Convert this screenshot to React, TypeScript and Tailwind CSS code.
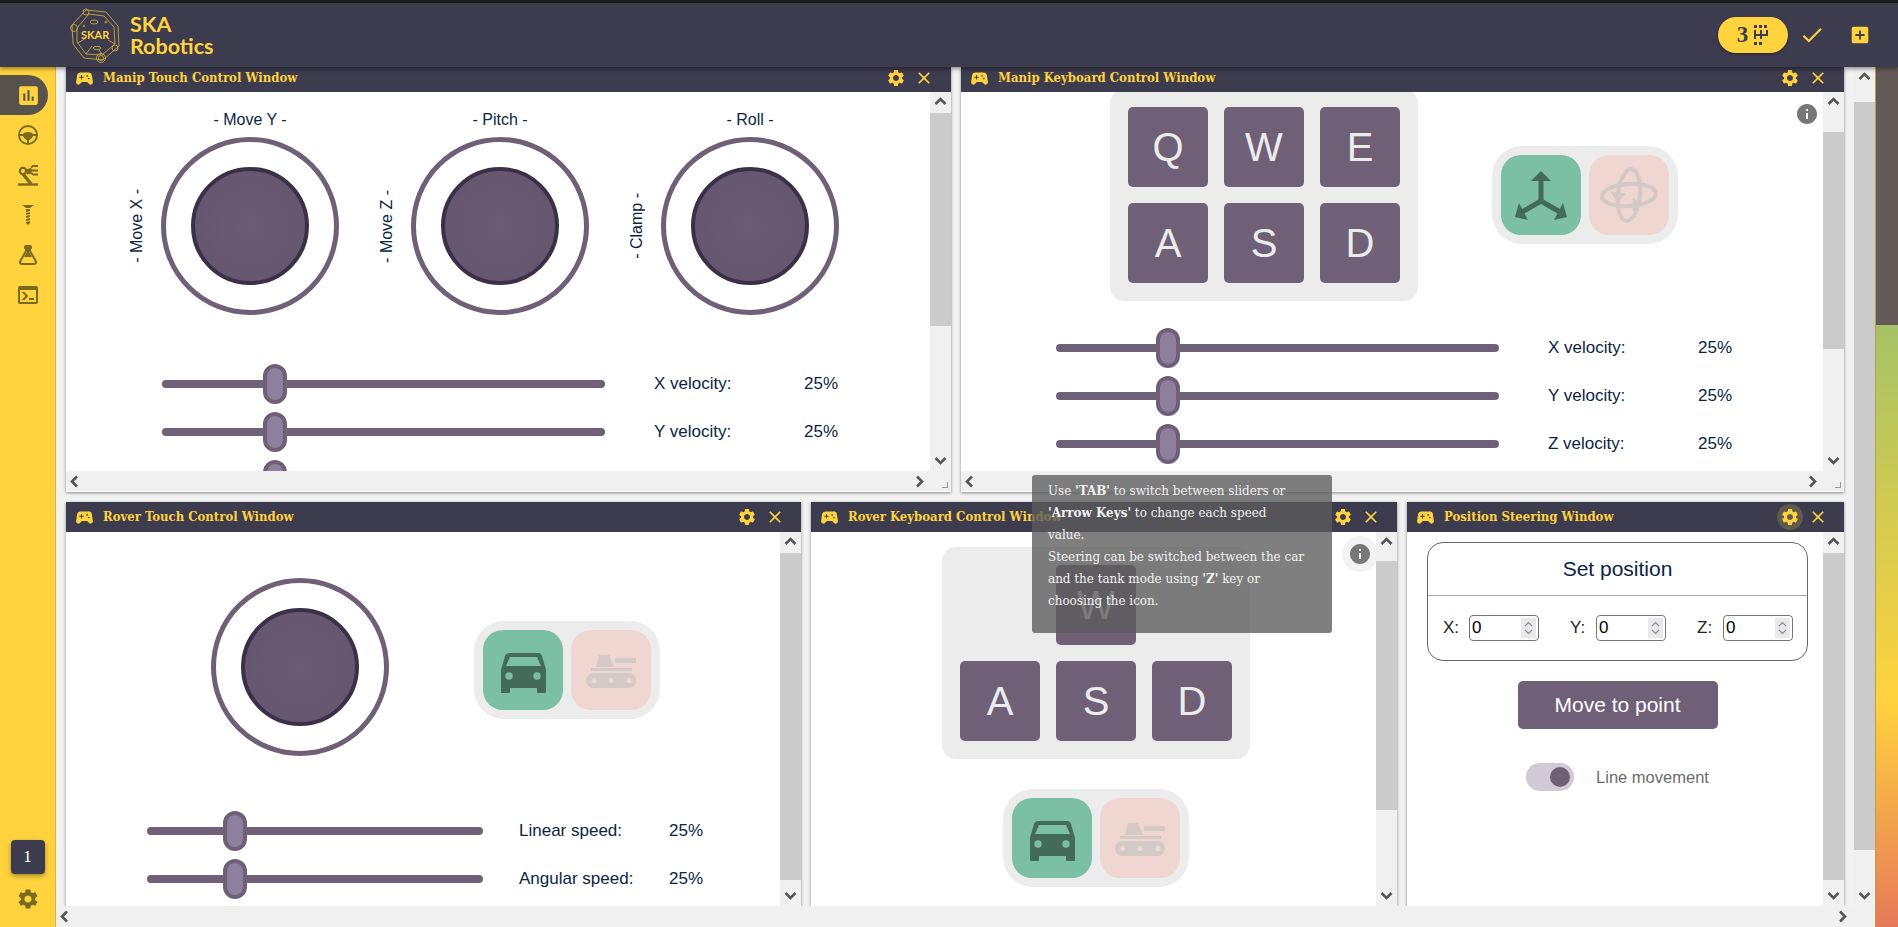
import { MdAddBox, MdAssessment, MdCheck, MdClose, MdInfo, MdSettings, MdSportsEsports } from "react-icons/md";

const serif = "font-['DejaVu_Serif',serif] [font-stretch:condensed]";

function Chevron({ dir }: { dir: "up" | "down" | "left" | "right" }) {
  const pts = {
    up: "1.5,8 6.5,3 11.5,8",
    down: "1.5,3 6.5,8 11.5,3",
    left: "8,1.5 3,6.5 8,11.5",
    right: "3,1.5 8,6.5 3,11.5",
  }[dir];
  return (
    <svg width="13" height="13" viewBox="0 0 13 13" fill="none" stroke="#555" strokeWidth="2.6">
      <polyline points={pts} />
    </svg>
  );
}

function VBar({ before, thumb, bottom = true }: { before: number; thumb: number; bottom?: boolean }) {
  return (
    <div className="flex h-full w-[21px] shrink-0 flex-col bg-[#f0f0f0]">
      <div className="flex shrink-0 items-start justify-center pt-[4px]" style={{ height: before }}>
        <Chevron dir="up" />
      </div>
      <div className="shrink-0 bg-[#cbcbcb]" style={{ height: thumb }} />
      <div className="flex flex-1 items-end justify-center pb-[3px]">{bottom && <Chevron dir="down" />}</div>
    </div>
  );
}

function HBar() {
  return (
    <div className="flex h-[20px] shrink-0 bg-[#f0f0f0]">
      <div className="flex flex-1 items-center justify-between pl-[3px] pr-[3px]">
        <Chevron dir="left" />
        <Chevron dir="right" />
      </div>
      <div className="flex w-[21px] items-end justify-end p-[3px]">
        <div className="h-[6px] w-[6px] border-r border-b border-[#999]" />
      </div>
    </div>
  );
}

function Window({
  title,
  width,
  headerClass,
  gearActive,
  children,
}: {
  title: string;
  width: string;
  headerClass: string;
  gearActive?: boolean;
  children: React.ReactNode;
}) {
  return (
    <div className={`flex h-full flex-col bg-white shadow-[0_1px_3px_rgba(0,0,0,0.45)] ${width}`}>
      <div className={`flex shrink-0 items-center bg-[#3d3b4e] pl-[8px] text-[#ffd33d] ${headerClass}`}>
        <MdSportsEsports size={21} />
        <span className={`ml-[8px] flex-1 text-[13px] font-bold ${serif}`}>{title}</span>
        <span
          className={`mr-[5px] flex h-[26px] w-[26px] items-center justify-center rounded-full ${
            gearActive ? "bg-[#5f5a4c]" : ""
          }`}
        >
          <MdSettings size={20} />
        </span>
        <MdClose size={20} />
      </div>
      {children}
    </div>
  );
}

function Joystick() {
  return (
    <div className="flex h-[178px] w-[178px] shrink-0 items-center justify-center rounded-full border-[5px] border-[#6f6078] bg-white">
      <div className="h-[118px] w-[118px] rounded-full border-[4px] border-[#3b3048] bg-[radial-gradient(circle,#6b5c74,#63556d)]" />
    </div>
  );
}

function JoyGroup({ top, side }: { top: string; side: string }) {
  return (
    <div className="flex w-[250px] shrink-0 items-end">
      <div className="mr-[14px] flex h-[178px] w-[20px] items-center justify-center">
        <span className="rotate-180 text-[16px] whitespace-nowrap text-[#0b2545] [writing-mode:vertical-rl]">{side}</span>
      </div>
      <div className="flex flex-col items-center">
        <div className="mb-[7px] h-[20px] text-[16px] leading-[20px] text-[#0b2545]">{top}</div>
        <Joystick />
      </div>
    </div>
  );
}

function SliderRow({
  label,
  width,
  thumb,
  gap,
}: {
  label: string;
  width: string;
  thumb: string;
  gap: string;
}) {
  return (
    <div className="flex h-[48px] shrink-0 items-center">
      <div className={`relative h-[8px] rounded-full bg-[#6f6078] ${width}`}>
        <div className={`absolute top-[-16px] h-[40px] w-[24px] rounded-[12px] border-[4px] border-[#6f6078] bg-[#8e7f9c] ${thumb}`} />
      </div>
      <div className={`w-[150px] text-[17px] text-[#0b2545] ${gap}`}>{label}</div>
      <div className="text-[17px] text-[#0b2545]">25%</div>
    </div>
  );
}

function Key({ k }: { k: string }) {
  return (
    <div className="flex h-[80px] w-[80px] items-center justify-center rounded-[5px] bg-[#6f6078] text-[40px] text-[#ececec]">
      {k}
    </div>
  );
}

function CarIcon() {
  return (
    <svg viewBox="0 0 80 80" className="h-[80px] w-[80px]" fill="#436a5a">
      <path
        fillRule="evenodd"
        d="M27 23H55Q58 23 59 26L63 40V62Q63 63 62 63H55Q54 63 54 62V58H27V62Q27 63 26 63H19Q18 63 18 62V40L22 26Q23 23 27 23ZM27 27L23 36H58L54 27Z"
      />
      <circle cx="26" cy="46" r="3.7" fill="#7bbfa5" />
      <circle cx="54" cy="46" r="3.7" fill="#7bbfa5" />
    </svg>
  );
}

function TankIcon() {
  return (
    <svg viewBox="0 0 80 80" className="h-[80px] w-[80px]" fill="#d3c9c6">
      <path d="M28 25H38L43 37H25Z" />
      <rect x="44" y="28" width="21" height="5" />
      <rect x="20" y="38" width="41" height="3" />
      <rect x="15" y="43" width="50" height="15" rx="7.5" />
      <circle cx="23" cy="50.5" r="2.6" fill="#efd6d0" />
      <circle cx="40" cy="50.5" r="2.6" fill="#efd6d0" />
      <circle cx="58" cy="50.5" r="2.6" fill="#efd6d0" />
    </svg>
  );
}

function AxesIcon() {
  return (
    <svg viewBox="0 0 80 80" className="h-[80px] w-[80px]" fill="#436a5a" stroke="none">
      <path d="M40 46V24M40 46L21 57M40 46L59 57" stroke="#436a5a" strokeWidth="5" fill="none" />
      <path d="M30 26L40 16L50 26Z" />
      <path d="M18 48L14 62L27 65Z" />
      <path d="M62 48L66 62L53 65Z" />
    </svg>
  );
}

function RotateIcon() {
  return (
    <svg viewBox="0 0 80 80" className="h-[80px] w-[80px]" fill="none" stroke="#d3c9c6" strokeWidth="4">
      <ellipse cx="40" cy="40" rx="11" ry="26" transform="rotate(6 40 40)" />
      <ellipse cx="40" cy="40" rx="27" ry="11" transform="rotate(-4 40 40)" />
      <path d="M22 37L29 47L36 39Z" fill="#d3c9c6" strokeWidth="1" />
      <path d="M44 43L52 50L44 56Z" fill="#d3c9c6" strokeWidth="1" />
    </svg>
  );
}

function ModeSelect({ left, right }: { left: React.ReactNode; right: React.ReactNode }) {
  return (
    <div className="flex h-[98px] w-[186px] shrink-0 items-center gap-[8px] rounded-[30px] bg-[#ececec] p-[9px]">
      <div className="h-[80px] w-[80px] rounded-[20px] bg-[#7bbfa5]">{left}</div>
      <div className="h-[80px] w-[80px] rounded-[20px] bg-[#efd6d0]">{right}</div>
    </div>
  );
}

function CoordInput({ label }: { label: string }) {
  return (
    <div className="flex w-[127px] shrink-0 items-center text-[17px] text-[#222]">
      <span className="w-[26px]">{label}</span>
      <div className="relative h-[26px] w-[70px]">
        <input
          type="text"
          defaultValue="0"
          className="h-full w-full rounded-[4px] border border-[#767676] bg-white pl-[2px] text-[17px] text-black"
        />
        <span className="absolute top-[3px] right-[3px] flex h-[20px] w-[15px] flex-col items-center justify-center gap-[2px] bg-[#e9e9ed]">
          <svg width="9" height="6" viewBox="0 0 9 6" fill="none" stroke="#8a8a8a" strokeWidth="1.2">
            <polyline points="1,5 4.5,1.5 8,5" />
          </svg>
          <svg width="9" height="6" viewBox="0 0 9 6" fill="none" stroke="#8a8a8a" strokeWidth="1.2">
            <polyline points="1,1 4.5,4.5 8,1" />
          </svg>
        </span>
      </div>
    </div>
  );
}

function SteeringIcon() {
  return (
    <svg viewBox="0 0 24 24" width="24" height="24" fill="currentColor">
      <path d="M12,2A10,10 0 0,0 2,12A10,10 0 0,0 12,22A10,10 0 0,0 22,12A10,10 0 0,0 12,2M12,4C16.1,4 19.5,7.1 20,11H17C16.5,9.9 14.4,9 12,9C9.6,9 7.5,9.9 7,11H4C4.5,7.1 7.9,4 12,4M4,13H7C7.2,14.3 9.2,16.6 11,17V20C7.4,19.6 4.4,16.6 4,13M13,20V17C14.8,16.6 16.8,14.3 17,13H20C19.6,16.6 16.6,19.6 13,20Z" />
    </svg>
  );
}

function ArmIcon() {
  return (
    <svg viewBox="0 0 20 21" width="20" height="21" fill="none" stroke="currentColor" strokeWidth="2.2">
      <path d="M0 19.5H20" strokeWidth="2.4" />
      <path d="M5 9L13 19" strokeWidth="3.4" />
      <circle cx="5" cy="6" r="3.2" />
      <path d="M8 5L13 3.5V8L9 9" fill="currentColor" strokeWidth="1" />
      <path d="M13 2.5L15 1H20M13 5.5H20M13 8L15 9.5H20" strokeWidth="1.8" />
    </svg>
  );
}

function DrillIcon() {
  return (
    <svg viewBox="0 0 12 20" width="12" height="20" fill="currentColor">
      <path d="M0 0H12L8 3H4Z" />
      <path d="M4 4H8V6L4 7ZM4 8L8 7V9L4 10ZM4 11L8 10V12L4 13ZM4 14L8 13V15L4 16ZM4 17L8 16V18L6 20L4 18Z" />
    </svg>
  );
}

function FlaskIcon() {
  return (
    <svg viewBox="0 0 24 24" width="24" height="24" fill="currentColor">
      <path d="M5,19A1,1 0 0,0 6,20H18A1,1 0 0,0 19,19C19,18.79 18.93,18.59 18.82,18.43L13,8.35V4H11V8.35L5.18,18.43C5.07,18.59 5,18.79 5,19M6,22A3,3 0 0,1 3,19C3,18.4 3.18,17.84 3.5,17.37L9,7.81V6A1,1 0 0,1 8,5V4A2,2 0 0,1 10,2H14A2,2 0 0,1 16,4V5A1,1 0 0,1 15,6V7.81L20.5,17.37C20.82,17.84 21,18.4 21,19A3,3 0 0,1 18,22H6Z" />
      <path d="M11 4H13V9L16 14H8L11 9Z" />
    </svg>
  );
}

function ConsoleIcon() {
  return (
    <svg viewBox="0 0 24 24" width="24" height="24" fill="currentColor">
      <path d="M20,19V7H4V19H20M20,3A2,2 0 0,1 22,5V19A2,2 0 0,1 20,21H4A2,2 0 0,1 2,19V5C2,3.89 2.9,3 4,3H20M13,17V15H18V17H13M9.58,13L5.57,9H8.4L11.7,12.3C12.09,12.69 12.09,13.33 11.7,13.72L8.42,17H5.59L9.58,13Z" />
    </svg>
  );
}

function ShiftIcon() {
  return (
    <svg viewBox="0 0 15 20" width="15" height="20" fill="#3d3b4e">
      <rect x="0" y="0" width="3" height="3" />
      <rect x="5" y="0" width="3" height="3" />
      <rect x="10" y="0" width="3" height="3" />
      <rect x="0" y="5" width="2" height="9" />
      <rect x="6" y="5" width="2" height="9" />
      <rect x="12" y="5" width="2" height="6" />
      <rect x="0" y="9" width="14" height="2" />
      <rect x="0" y="17" width="3" height="3" />
      <rect x="5" y="17" width="3" height="3" />
    </svg>
  );
}

function Logo() {
  return (
    <svg viewBox="0 0 52 55" className="h-[55px] w-[52px]" fill="none" stroke="#c7a83c" strokeWidth="0.9">
      <path d="M16 2L36 4L48 18L49 38L33 52L14 50L3 36L2 17Z" />
      <path d="M19 6L34 8L44 19L45 36L32 47L16 46L7 34L7 20Z" />
      <path d="M8 35L16 30M16 46L22 38M33 47L28 41M45 36L38 32" />
      <circle cx="16" cy="4" r="3" />
      <circle cx="4" cy="20" r="3.5" />
      <circle cx="45" cy="40" r="3" />
      <circle cx="31" cy="50" r="4.5" />
      <circle cx="31" cy="50" r="2.5" />
      <ellipse cx="24" cy="14" rx="4" ry="2" />
      <ellipse cx="27" cy="40" rx="4" ry="1.6" />
      <circle cx="36" cy="14" r="1" />
      <circle cx="14" cy="18" r="0.8" />
      <text x="11" y="31" fontSize="11" fontWeight="700" fill="#ffd33d" stroke="none" fontFamily="Lato, sans-serif">
        SKAR
      </text>
    </svg>
  );
}

export default function App() {
  const side = [<SteeringIcon key="a" />, <ArmIcon key="b" />, <DrillIcon key="c" />, <FlaskIcon key="d" />, <ConsoleIcon key="e" />];
  return (
    <div className="relative flex h-[927px] w-[1898px] flex-col overflow-hidden bg-[#f2f2f2] font-['Liberation_Sans',sans-serif]">
      {/* top bar */}
      <div className="relative z-20 flex h-[67px] shrink-0 items-center border-t-[3px] border-[#1c1c1c] bg-[#3d3b4e] pr-[27px] pl-[70px] shadow-[0_2px_4px_rgba(0,0,0,0.4)]">
        <Logo />
        <div className="ml-[8px] font-['Lato',sans-serif] text-[21.5px] leading-[22px] font-bold text-[#ffd33d]">
          <div>SKA</div>
          <div>Robotics</div>
        </div>
        <div className="ml-auto flex h-[36px] w-[70px] items-center justify-center gap-[6px] rounded-full bg-[#ffd33d] shadow-[0_1px_3px_rgba(0,0,0,0.4)]">
          <span className="font-['Liberation_Serif',serif] text-[23px] font-bold text-[#3d3b4e]">3</span>
          <ShiftIcon />
        </div>
        <MdCheck size={26} className="ml-[11px] text-[#ffd33d]" />
        <MdAddBox size={22} className="ml-[24px] text-[#ffd33d]" />
      </div>

      <div className="flex min-h-0 flex-1">
        {/* sidebar */}
        <div className="flex w-[56px] shrink-0 flex-col border-r border-[#e0b52f] bg-[#ffd33d] pt-[8px] pb-[16px] text-[#7a6a20]">
          <div className="flex h-[40px] w-[48px] items-center justify-center rounded-r-full bg-[#57524c] pl-[8px] text-[#ffd33d]">
            <MdAssessment size={25} />
          </div>
          {side.map((icon) => (
            <div key={icon.key} className="flex h-[40px] items-center justify-center">
              {icon}
            </div>
          ))}
          <div className="mx-auto mt-auto flex h-[34px] w-[34px] items-center justify-center rounded-[4px] bg-[#3d3b4e] text-[17px] text-white shadow-[0_2px_5px_rgba(0,0,0,0.35)]">
            <span className="font-['Liberation_Serif',serif]">1</span>
          </div>
          <div className="mt-[13px] flex justify-center">
            <MdSettings size={24} />
          </div>
        </div>

        {/* page */}
        <div className="flex w-[1819px] shrink-0 flex-col">
          <div className="flex min-h-0 flex-1">
            <div className="flex w-[1798px] shrink-0 flex-col gap-[10px] overflow-hidden px-[10px]">
              <div className="flex h-[425px] shrink-0 gap-[10px]">
                {/* manip touch */}
                <Window title="Manip Touch Control Window" width="w-[885px]" headerClass="h-[25px] pb-[3px] pr-[17px]">
                  <div className="flex h-[379px] shrink-0">
                    <div className="min-w-0 flex-1 overflow-hidden pt-[18px]">
                      <div className="flex pl-[61px]">
                        <JoyGroup top="- Move Y -" side="- Move X -" />
                        <JoyGroup top="- Pitch -" side="- Move Z -" />
                        <JoyGroup top="- Roll -" side="- Clamp -" />
                      </div>
                      <div className="mt-[45px] pl-[96px]">
                        <SliderRow label="X velocity:" width="w-[443px]" thumb="left-[101px]" gap="ml-[49px]" />
                        <SliderRow label="Y velocity:" width="w-[443px]" thumb="left-[101px]" gap="ml-[49px]" />
                        <SliderRow label="Z velocity:" width="w-[443px]" thumb="left-[101px]" gap="ml-[49px]" />
                      </div>
                    </div>
                    <VBar before={21} thumb={213} />
                  </div>
                  <HBar />
                </Window>

                {/* manip keyboard */}
                <Window title="Manip Keyboard Control Window" width="w-[883px]" headerClass="h-[25px] pb-[3px] pr-[16px]">
                  <div className="flex h-[379px] shrink-0">
                    <div className="relative min-w-0 flex-1 overflow-hidden">
                      <div className="-mt-[3px] flex items-center justify-center gap-[74px] pl-[4px]">
                        <div className="grid grid-cols-3 gap-[16px] rounded-[14px] bg-[#ececec] p-[18px]">
                          {["Q", "W", "E", "A", "S", "D"].map((k) => (
                            <Key key={k} k={k} />
                          ))}
                        </div>
                        <ModeSelect left={<AxesIcon />} right={<RotateIcon />} />
                      </div>
                      <div className="mt-[23px] pl-[95px]">
                        <SliderRow label="X velocity:" width="w-[443px]" thumb="left-[100px]" gap="ml-[49px]" />
                        <SliderRow label="Y velocity:" width="w-[443px]" thumb="left-[100px]" gap="ml-[49px]" />
                        <SliderRow label="Z velocity:" width="w-[443px]" thumb="left-[100px]" gap="ml-[49px]" />
                      </div>
                      <MdInfo size={24} className="absolute top-[10px] right-[4px] text-[#777]" />
                    </div>
                    <VBar before={40} thumb={217} />
                  </div>
                  <HBar />
                </Window>
              </div>

              <div className="flex h-[404px] shrink-0 gap-[10px]">
                {/* rover touch */}
                <Window title="Rover Touch Control Window" width="w-[735px]" headerClass="h-[30px] pr-[16px]">
                  <div className="flex h-[374px]">
                    <div className="min-w-0 flex-1 overflow-hidden pt-[46px]">
                      <div className="flex items-center pl-[145px]">
                        <Joystick />
                        <div className="mt-[6px] ml-[85px]">
                          <ModeSelect left={<CarIcon />} right={<TankIcon />} />
                        </div>
                      </div>
                      <div className="mt-[51px] pl-[81px]">
                        <SliderRow label="Linear speed:" width="w-[336px]" thumb="left-[76px]" gap="ml-[36px]" />
                        <SliderRow label="Angular speed:" width="w-[336px]" thumb="left-[76px]" gap="ml-[36px]" />
                      </div>
                    </div>
                    <VBar before={21} thumb={327} />
                  </div>
                </Window>

                {/* rover keyboard */}
                <Window title="Rover Keyboard Control Window" width="w-[586px]" headerClass="h-[30px] pr-[16px]">
                  <div className="flex h-[374px]">
                    <div className="relative flex min-w-0 flex-1 flex-col items-center overflow-hidden pt-[15px] pl-[5px]">
                      <div className="grid w-[308px] grid-cols-3 gap-[16px] rounded-[14px] bg-[#ececec] p-[18px]">
                        <div className="col-start-2">
                          <Key k="W" />
                        </div>
                        <div className="col-start-1">
                          <Key k="A" />
                        </div>
                        <Key k="S" />
                        <Key k="D" />
                      </div>
                      <div className="mt-[30px]">
                        <ModeSelect left={<CarIcon />} right={<TankIcon />} />
                      </div>
                      <div className="absolute top-[4px] right-[-2px] flex h-[36px] w-[36px] items-center justify-center rounded-full bg-[#f3f3f3]">
                        <MdInfo size={24} className="text-[#777]" />
                      </div>
                    </div>
                    <VBar before={29} thumb={249} />
                  </div>
                </Window>

                {/* position */}
                <Window title="Position Steering Window" width="w-[437px]" headerClass="h-[30px] pr-[16px]" gearActive>
                  <div className="flex h-[374px]">
                    <div className="flex min-w-0 flex-1 flex-col items-center overflow-hidden pt-[10px] pl-[5px]">
                      <div className="w-[381px] rounded-[16px] border border-[#666]">
                        <div className="flex h-[53px] items-center justify-center border-b border-[#aaa] text-[21px] text-[#0b2545]">
                          Set position
                        </div>
                        <div className="flex h-[64px] items-center pl-[15px]">
                          <CoordInput label="X:" />
                          <CoordInput label="Y:" />
                          <CoordInput label="Z:" />
                        </div>
                      </div>
                      <div className="mt-[20px] flex h-[48px] w-[200px] items-center justify-center rounded-[5px] bg-[#6f6078] text-[21px] text-white">
                        Move to point
                      </div>
                      <div className="mt-[34px] flex items-center">
                        <div className="flex h-[28px] w-[48px] items-center justify-end rounded-full bg-[#cfcad3] pr-[4px]">
                          <div className="h-[20px] w-[20px] rounded-full bg-[#6f6078]" />
                        </div>
                        <span className="ml-[22px] text-[16.5px] text-[#6b6b6b]">Line movement</span>
                      </div>
                    </div>
                    <VBar before={21} thumb={327} />
                  </div>
                </Window>
              </div>
            </div>
            <VBar before={35} thumb={748} />
          </div>
          <div className="flex h-[21px] shrink-0 items-center justify-between bg-[#f0f0f0] pr-[25px] pl-[3px]">
            <Chevron dir="left" />
            <Chevron dir="right" />
          </div>
        </div>

        {/* window behind */}
        <div className="flex w-[23px] shrink-0 flex-col border-l border-[#b9a04a]">
          <div className="h-[258px] bg-[#635a57]" />
          <div className="flex-1 bg-[linear-gradient(#a5c266,#ffd33d_62%,#e8785a)]" />
        </div>
      </div>

      {/* tooltip */}
      <div className={`absolute top-[475px] left-[1032px] z-30 w-[300px] rounded-[3px] bg-[#5c5c5cc8] px-[16px] pt-[5px] pb-[21px] text-[13.3px] leading-[22px] whitespace-nowrap text-[#f2f2f2] ${serif}`}>
        Use <b>'TAB'</b> to switch between sliders or
        <br />
        <b>'Arrow Keys'</b> to change each speed
        <br />
        value.
        <br />
        Steering can be switched between the car
        <br />
        and the tank mode using <b>'Z'</b> key or
        <br />
        choosing the icon.
      </div>
    </div>
  );
}
